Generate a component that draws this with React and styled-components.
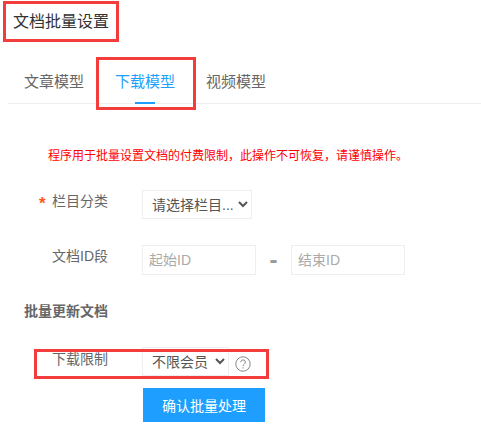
import React from 'react';
import styled, { createGlobalStyle } from 'styled-components';

const Global = createGlobalStyle`
  html, body {
    margin: 0;
    padding: 0;
    background: #fff;
  }
  body {
    font-family: "Liberation Sans", "Noto Sans CJK SC", sans-serif;
    font-size: 14px;
    color: #666;
  }
`;

const Page = styled.div`
  position: relative;
  width: 481px;
  height: 443px;
  overflow: hidden;
`;

const Title = styled.h1`
  margin: 0;
  padding: 11px 0 0 13px;
  height: 31px;
  font-size: 16px;
  line-height: 22px;
  font-weight: normal;
  color: #333;
`;

const Tabs = styled.ul`
  display: flex;
  list-style: none;
  margin: 10px 0 0 8px;
  padding: 0 0 0 1px;
  height: 51px;
  border-bottom: 1px solid #eee;
`;

const Tab = styled.li`
  position: relative;
  padding: 0 16px 0 15px;
  font-size: 15px;
  line-height: 60px;
  color: ${p => (p.$active ? '#1e9fff' : '#666')};

  &::after {
    content: '';
    display: ${p => (p.$active ? 'block' : 'none')};
    position: absolute;
    left: 35px;
    bottom: -1px;
    width: 20px;
    height: 2px;
    background: #1e9fff;
  }
`;

const Warning = styled.p`
  margin: 43px 0 0 48px;
  font-size: 12px;
  line-height: 18px;
  color: #f00;
`;

const Row = styled.div`
  display: flex;
  align-items: flex-start;
  margin-top: ${p => p.$top}px;
`;

const Label = styled.label`
  position: relative;
  width: 108px;
  flex: none;
  text-align: right;
  line-height: 22px;
  color: #666;
`;

const LimitLabel = styled(Label)`
  top: 1px;
`;

const Star = styled.span`
  position: absolute;
  left: 39px;
  top: 3px;
  font-size: 17px;
  font-weight: bold;
  line-height: 22px;
  color: #ff5722;
`;

const Select = styled.select`
  margin-left: 34px;
  width: ${p => p.$width}px;
  height: ${p => p.$height}px;
  padding: 0 0 0 5px;
  border: 1px solid #eee;
  border-radius: 0;
  background: #fff;
  font-family: inherit;
  font-size: 14px;
  color: #555;
  outline: none;
`;

const IdRange = styled.div`
  display: flex;
  align-items: center;
  margin-left: 34px;
`;

const IdInput = styled.input`
  box-sizing: border-box;
  width: 114px;
  height: 30px;
  padding: 0 6px;
  border: 1px solid #eee;
  font-family: inherit;
  font-size: 14px;
  outline: none;

  &::placeholder {
    color: #aaa;
  }
`;

const Dash = styled.span`
  width: 35px;
  text-align: center;
  font-size: 24px;
  line-height: 24px;
  font-weight: bold;
  color: #999;
`;

const Section = styled.h2`
  margin: 26px 0 0 24px;
  font-size: 14px;
  line-height: 20px;
  font-weight: bold;
  color: #666;
`;

const Help = styled.svg`
  margin: 9px 0 0 6px;
  flex: none;
`;

const Submit = styled.button`
  display: block;
  margin: 12px 0 0 143px;
  width: 122px;
  height: 34px;
  border: 0;
  background: #1e9fff;
  color: #fff;
  font-family: inherit;
  font-size: 14px;
`;

const Mark = styled.div`
  position: absolute;
  left: ${p => p.$x}px;
  top: ${p => p.$y}px;
  width: ${p => p.$w}px;
  height: ${p => p.$h}px;
  box-sizing: border-box;
  border: 3px solid #f33c3c;
  pointer-events: none;
`;

export default function App() {
  return (
    <Page>
      <Global />
      <Title>文档批量设置</Title>
      <Tabs>
        <Tab>文章模型</Tab>
        <Tab $active>下载模型</Tab>
        <Tab>视频模型</Tab>
      </Tabs>
      <Warning>程序用于批量设置文档的付费限制，此操作不可恢复，请谨慎操作。</Warning>
      <Row $top={25}>
        <Label><Star>*</Star>栏目分类</Label>
        <Select $width={110} $height={29} defaultValue="">
          <option value="">请选择栏目...</option>
        </Select>
      </Row>
      <Row $top={26}>
        <Label>文档ID段</Label>
        <IdRange>
          <IdInput placeholder="起始ID" />
          <Dash>-</Dash>
          <IdInput placeholder="结束ID" />
        </IdRange>
      </Row>
      <Section>批量更新文档</Section>
      <Row $top={26}>
        <LimitLabel>下载限制</LimitLabel>
        <Select $width={87} $height={29} defaultValue="0">
          <option value="0">不限会员</option>
        </Select>
        <Help width="16" height="16" viewBox="0 0 16 16" fill="none" stroke="#888" strokeWidth="1">
          <circle cx="8" cy="8" r="7.2" />
          <path d="M5.7 6.2a2.3 2.3 0 1 1 3.6 1.9c-.8.6-1.3 1-1.3 2" />
          <path d="M8 11.3v1.2" />
        </Help>
      </Row>
      <Submit>确认批量处理</Submit>
      <Mark $x={3} $y={1} $w={116} $h={41} />
      <Mark $x={96} $y={57} $w={100} $h={53} />
      <Mark $x={34} $y={349} $w={235} $h={30} />
    </Page>
  );
}
